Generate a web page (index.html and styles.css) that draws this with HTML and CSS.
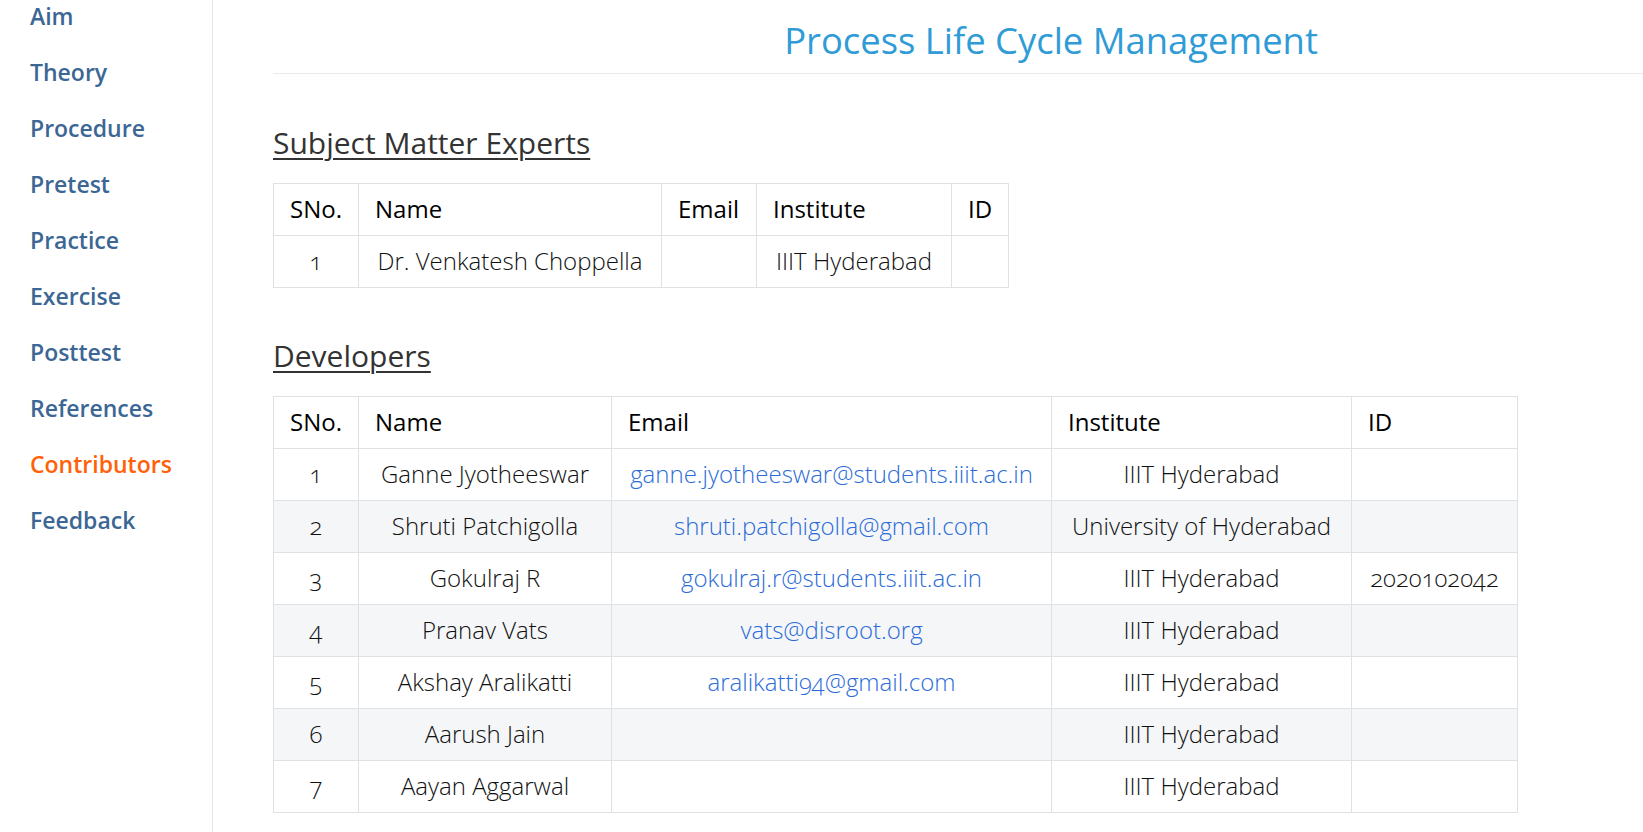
FILE: index.html
```html
<!DOCTYPE html>
<html lang="en">
<head>
<meta charset="utf-8">
<title>Contributors - Process Life Cycle Management</title>
<link rel="stylesheet" href="styles.css">
</head>
<body>
<div class="page">
  <nav class="sidebar">
    <ul class="nav-list">
      <li><a class="nav-link" href="#">Aim</a></li>
      <li><a class="nav-link" href="#">Theory</a></li>
      <li><a class="nav-link" href="#">Procedure</a></li>
      <li><a class="nav-link" href="#">Pretest</a></li>
      <li><a class="nav-link" href="#">Practice</a></li>
      <li><a class="nav-link" href="#">Exercise</a></li>
      <li><a class="nav-link" href="#">Posttest</a></li>
      <li><a class="nav-link" href="#">References</a></li>
      <li><a class="nav-link nav-link-active" href="#">Contributors</a></li>
      <li><a class="nav-link" href="#">Feedback</a></li>
    </ul>
  </nav>
  <main class="content">
    <header class="page-header">
      <h1 class="page-title">Process Life Cycle Management</h1>
    </header>

    <section class="section">
      <h2 class="section-title">Subject Matter Experts</h2>
      <table class="table table-sme">
        <colgroup>
          <col class="sme-sno"><col class="sme-name"><col class="sme-email"><col class="sme-inst"><col class="sme-id">
        </colgroup>
        <thead>
          <tr><th>SNo.</th><th>Name</th><th>Email</th><th>Institute</th><th>ID</th></tr>
        </thead>
        <tbody>
          <tr><td>1</td><td>Dr. Venkatesh Choppella</td><td></td><td>IIIT Hyderabad</td><td></td></tr>
        </tbody>
      </table>
    </section>

    <section class="section">
      <h2 class="section-title">Developers</h2>
      <table class="table table-dev">
        <colgroup>
          <col class="dev-sno"><col class="dev-name"><col class="dev-email"><col class="dev-inst"><col class="dev-id">
        </colgroup>
        <thead>
          <tr><th>SNo.</th><th>Name</th><th>Email</th><th>Institute</th><th>ID</th></tr>
        </thead>
        <tbody>
          <tr><td>1</td><td>Ganne Jyotheeswar</td><td><a class="mail" href="#">ganne.jyotheeswar@students.iiit.ac.in</a></td><td>IIIT Hyderabad</td><td></td></tr>
          <tr><td>2</td><td>Shruti Patchigolla</td><td><a class="mail" href="#">shruti.patchigolla@gmail.com</a></td><td>University of Hyderabad</td><td></td></tr>
          <tr><td>3</td><td>Gokulraj R</td><td><a class="mail" href="#">gokulraj.r@students.iiit.ac.in</a></td><td>IIIT Hyderabad</td><td>2020102042</td></tr>
          <tr><td>4</td><td>Pranav Vats</td><td><a class="mail" href="#">vats@disroot.org</a></td><td>IIIT Hyderabad</td><td></td></tr>
          <tr><td>5</td><td>Akshay Aralikatti</td><td><a class="mail" href="#">aralikatti94@gmail.com</a></td><td>IIIT Hyderabad</td><td></td></tr>
          <tr><td>6</td><td>Aarush Jain</td><td></td><td>IIIT Hyderabad</td><td></td></tr>
          <tr><td>7</td><td>Aayan Aggarwal</td><td></td><td>IIIT Hyderabad</td><td></td></tr>
        </tbody>
      </table>
    </section>
  </main>
</div>
</body>
</html>
```
FILE: styles.css
```css
html, body {
  margin: 0;
  padding: 0;
  height: 100%;
  overflow: hidden;
  background: #ffffff;
}

.page {
  display: flex;
  min-height: 100vh;
}

.sidebar {
  width: 212px;
  flex: none;
  border-right: 1px solid #e6e6e6;
  background: #ffffff;
}

.nav-list {
  list-style: none;
  margin: 0;
  padding: 0 0 0 30px;
  display: flex;
  flex-direction: column;
  gap: 24px;
}

.nav-link {
  display: block;
  font-family: "Open Sans", sans-serif;
  font-weight: 600;
  font-size: 23px;
  line-height: 32px;
  color: #3c6795;
  text-decoration: none;
}

.nav-link-active {
  color: #ff6108;
}

.content {
  flex: 1;
  min-width: 0;
  padding-left: 60px;
  font-family: "Open Sans", sans-serif;
  font-variant-numeric: oldstyle-nums;
}

.page-header {
  padding: 18px 0 11px 186px;
  border-bottom: 1px solid #e9e9e9;
  text-align: center;
}

.page-title {
  margin: 0;
  font-size: 36.4px;
  line-height: 44px;
  font-weight: 400;
  color: #2f9bd7;
  white-space: nowrap;
}

.section {
  margin-top: 51px;
}

.section + .section {
  margin-top: 50px;
}

.section-title {
  margin: 0 0 22px;
  font-size: 30px;
  line-height: 36px;
  font-weight: 400;
  color: #333333;
  text-decoration: underline;
  text-decoration-thickness: 2px;
  text-underline-offset: 4px;
}

.table {
  border-collapse: collapse;
  table-layout: fixed;
  font-size: 24px;
}

.table th,
.table td {
  border: 1px solid #dfe1e5;
  padding: 11px 16px 13px;
  line-height: 27px;
  white-space: nowrap;
}

.table th {
  text-align: left;
  font-weight: 500;
  color: #000000;
}

.table td {
  text-align: center;
  font-weight: 300;
  color: #111111;
}

.table tbody tr:nth-child(even) {
  background: #f5f6f8;
}

.mail {
  color: #2b6cd8;
  text-decoration: none;
}

.table-sme { width: 735px; }
.sme-sno { width: 85px; }
.sme-name { width: 303px; }
.sme-email { width: 95px; }
.sme-inst { width: 195px; }
.sme-id { width: 57px; }

.table-dev { width: 1244px; }
.dev-sno { width: 85px; }
.dev-name { width: 253px; }
.dev-email { width: 440px; }
.dev-inst { width: 300px; }
.dev-id { width: 166px; }
```
